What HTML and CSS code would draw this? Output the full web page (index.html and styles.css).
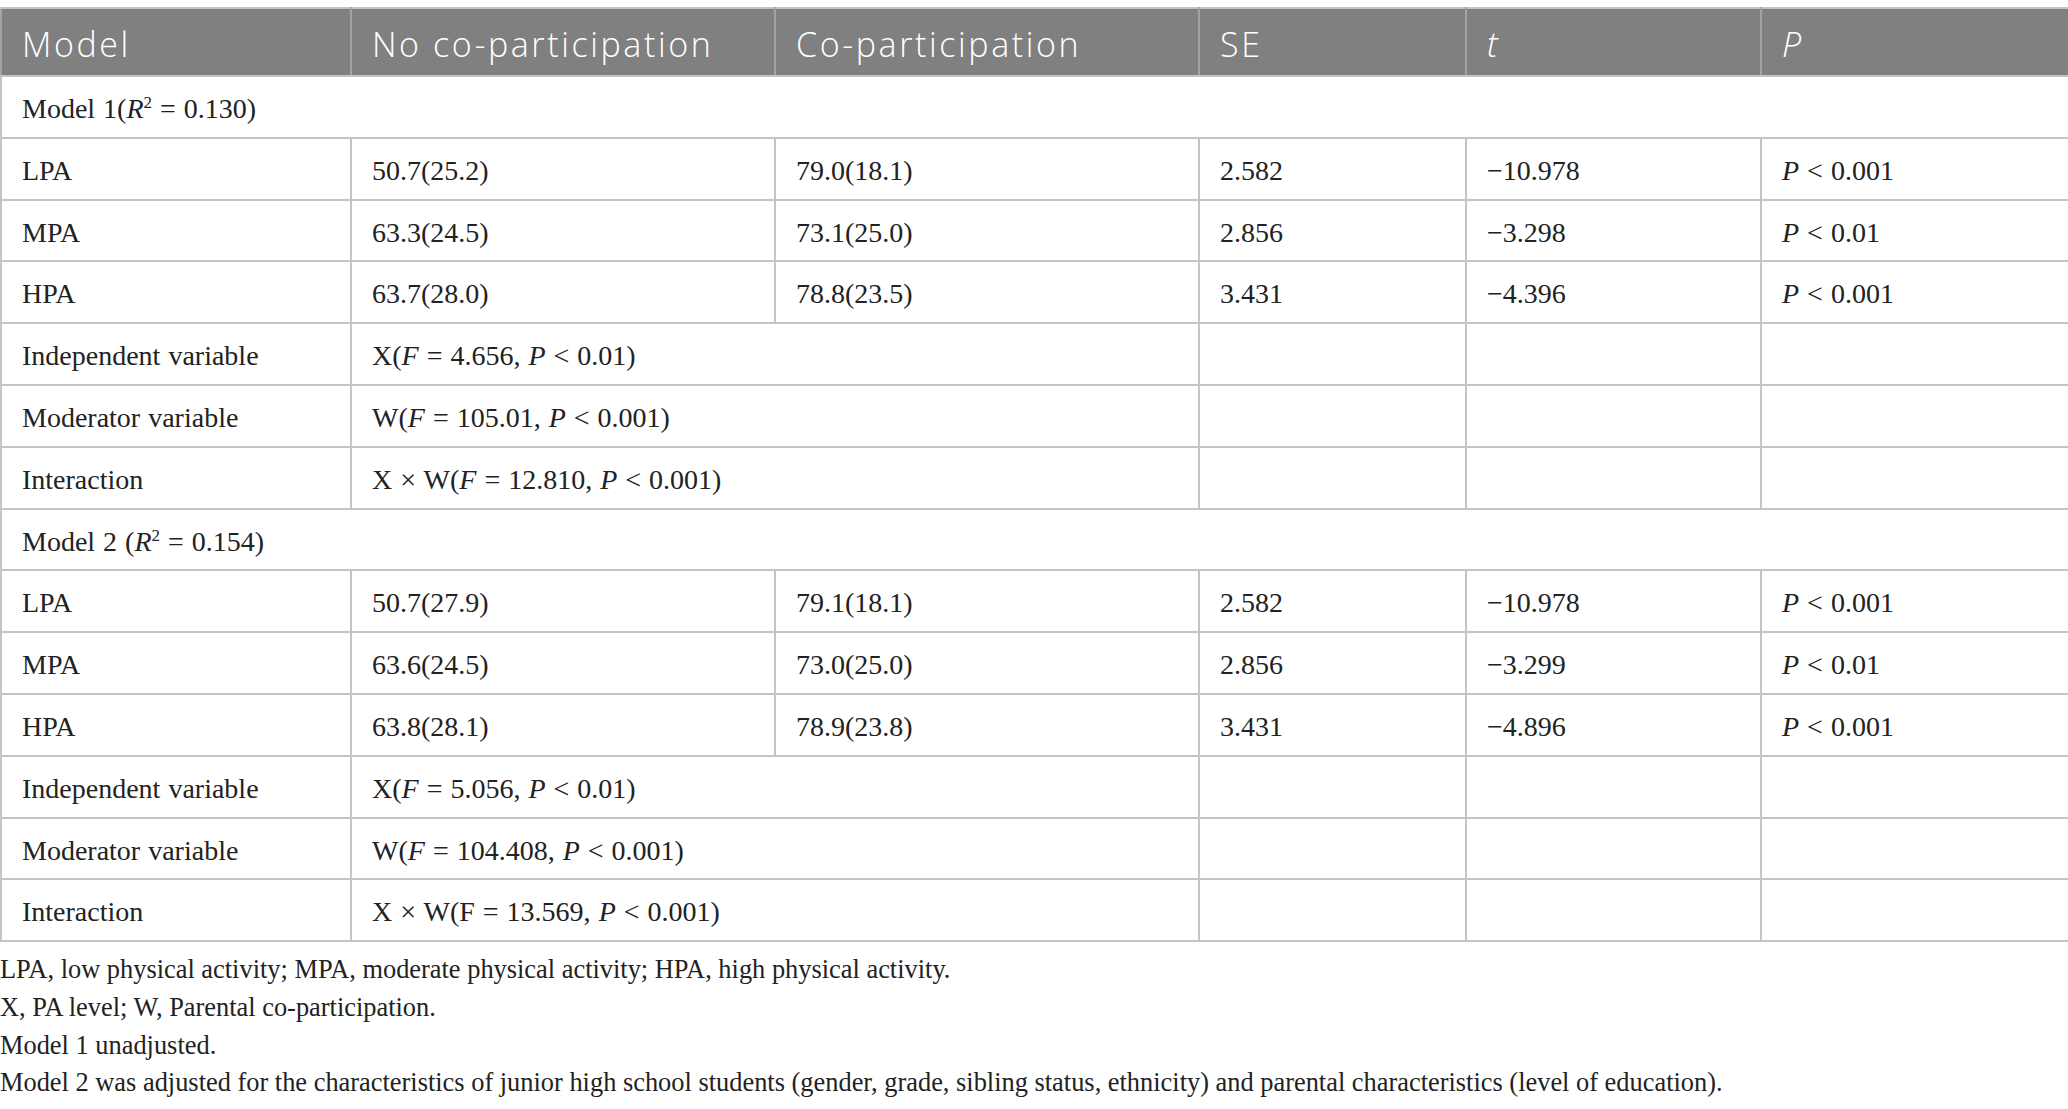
FILE: index.html
```html
<!DOCTYPE html>
<html lang="en">
<head>
    <meta charset="UTF-8">
    <meta name="viewport" content="width=device-width, initial-scale=1.0">
    <title>Parental co-participation model</title>
    <link rel="stylesheet" href="styles.css">
</head>
<body>
    <div class="page">
        <table class="data-table">
            <colgroup>
                <col class="col-model">
                <col class="col-no">
                <col class="col-co">
                <col class="col-se">
                <col class="col-t">
                <col class="col-p">
            </colgroup>
            <thead>
                <tr>
                    <th>Model</th>
                    <th>No co-participation</th>
                    <th>Co-participation</th>
                    <th>SE</th>
                    <th><i>t</i></th>
                    <th><i>P</i></th>
                </tr>
            </thead>
            <tbody>
                <!-- Model 1 -->
                <tr class="group-row">
                    <td colspan="6">Model 1(<i>R</i><sup>2</sup> = 0.130)</td>
                </tr>
                <tr>
                    <td>LPA</td>
                    <td>50.7(25.2)</td>
                    <td>79.0(18.1)</td>
                    <td>2.582</td>
                    <td>&minus;10.978</td>
                    <td><i>P</i> &lt; 0.001</td>
                </tr>
                <tr>
                    <td>MPA</td>
                    <td>63.3(24.5)</td>
                    <td>73.1(25.0)</td>
                    <td>2.856</td>
                    <td>&minus;3.298</td>
                    <td><i>P</i> &lt; 0.01</td>
                </tr>
                <tr>
                    <td>HPA</td>
                    <td>63.7(28.0)</td>
                    <td>78.8(23.5)</td>
                    <td>3.431</td>
                    <td>&minus;4.396</td>
                    <td><i>P</i> &lt; 0.001</td>
                </tr>
                <tr>
                    <td>Independent variable</td>
                    <td colspan="2">X(<i>F</i> = 4.656, <i>P</i> &lt; 0.01)</td>
                    <td></td>
                    <td></td>
                    <td></td>
                </tr>
                <tr>
                    <td>Moderator variable</td>
                    <td colspan="2">W(<i>F</i> = 105.01, <i>P</i> &lt; 0.001)</td>
                    <td></td>
                    <td></td>
                    <td></td>
                </tr>
                <tr>
                    <td>Interaction</td>
                    <td colspan="2">X &times; W(<i>F</i> = 12.810, <i>P</i> &lt; 0.001)</td>
                    <td></td>
                    <td></td>
                    <td></td>
                </tr>

                <!-- Model 2 -->
                <tr class="group-row">
                    <td colspan="6">Model 2 (<i>R</i><sup>2</sup> = 0.154)</td>
                </tr>
                <tr>
                    <td>LPA</td>
                    <td>50.7(27.9)</td>
                    <td>79.1(18.1)</td>
                    <td>2.582</td>
                    <td>&minus;10.978</td>
                    <td><i>P</i> &lt; 0.001</td>
                </tr>
                <tr>
                    <td>MPA</td>
                    <td>63.6(24.5)</td>
                    <td>73.0(25.0)</td>
                    <td>2.856</td>
                    <td>&minus;3.299</td>
                    <td><i>P</i> &lt; 0.01</td>
                </tr>
                <tr>
                    <td>HPA</td>
                    <td>63.8(28.1)</td>
                    <td>78.9(23.8)</td>
                    <td>3.431</td>
                    <td>&minus;4.896</td>
                    <td><i>P</i> &lt; 0.001</td>
                </tr>
                <tr>
                    <td>Independent variable</td>
                    <td colspan="2">X(<i>F</i> = 5.056, <i>P</i> &lt; 0.01)</td>
                    <td></td>
                    <td></td>
                    <td></td>
                </tr>
                <tr>
                    <td>Moderator variable</td>
                    <td colspan="2">W(<i>F</i> = 104.408, <i>P</i> &lt; 0.001)</td>
                    <td></td>
                    <td></td>
                    <td></td>
                </tr>
                <tr>
                    <td>Interaction</td>
                    <td colspan="2">X &times; W(F = 13.569, <i>P</i> &lt; 0.001)</td>
                    <td></td>
                    <td></td>
                    <td></td>
                </tr>
            </tbody>
        </table>

        <div class="footnotes">
            <p>LPA, low physical activity; MPA, moderate physical activity; HPA, high physical activity.</p>
            <p>X, PA level; W, Parental co-participation.</p>
            <p>Model 1 unadjusted.</p>
            <p>Model 2 was adjusted for the characteristics of junior high school students (gender, grade, sibling status, ethnicity) and parental characteristics (level of education).</p>
        </div>
    </div>
</body>
</html>
```

FILE: styles.css
```css
body {
    margin: 0;
    padding: 0;
    background-color: #fff;
    color: #222;
    font-family: "Liberation Serif", "Times New Roman", serif;
}

.page {
    padding-top: 7px;
}

.data-table {
    width: 2068px;
    table-layout: fixed;
    border-collapse: collapse;
    border: 2px solid #c4c4c4;
}

.col-model { width: 350px; }
.col-no { width: 424px; }
.col-co { width: 424px; }
.col-se { width: 267px; }
.col-t { width: 295px; }
.col-p { width: 308px; }

th {
    background-color: #7f807f;
    color: #fff;
    font-family: "Open Sans", "Noto Sans", sans-serif;
    font-weight: 300;
    font-size: 34px;
    letter-spacing: 2.6px;
    line-height: 46px;
    text-align: left;
    padding: 12px 20px 8px;
    border: 2px solid #a3a3a3;
    border-top-color: #c4c4c4;
    border-bottom-color: #c4c4c4;
}

th i {
    letter-spacing: 0;
}

td {
    font-size: 28px;
    line-height: 33.8px;
    padding: 15px 20px 11px;
    text-align: left;
    border: 2px solid #c4c4c4;
    white-space: nowrap;
    word-spacing: 1px;
}

sup {
    font-size: 17px;
    line-height: 0;
    vertical-align: 10px;
}

.footnotes {
    margin-top: 9px;
    font-size: 26.4px;
    line-height: 37.7px;
}

.footnotes p {
    margin: 0;
}
```
